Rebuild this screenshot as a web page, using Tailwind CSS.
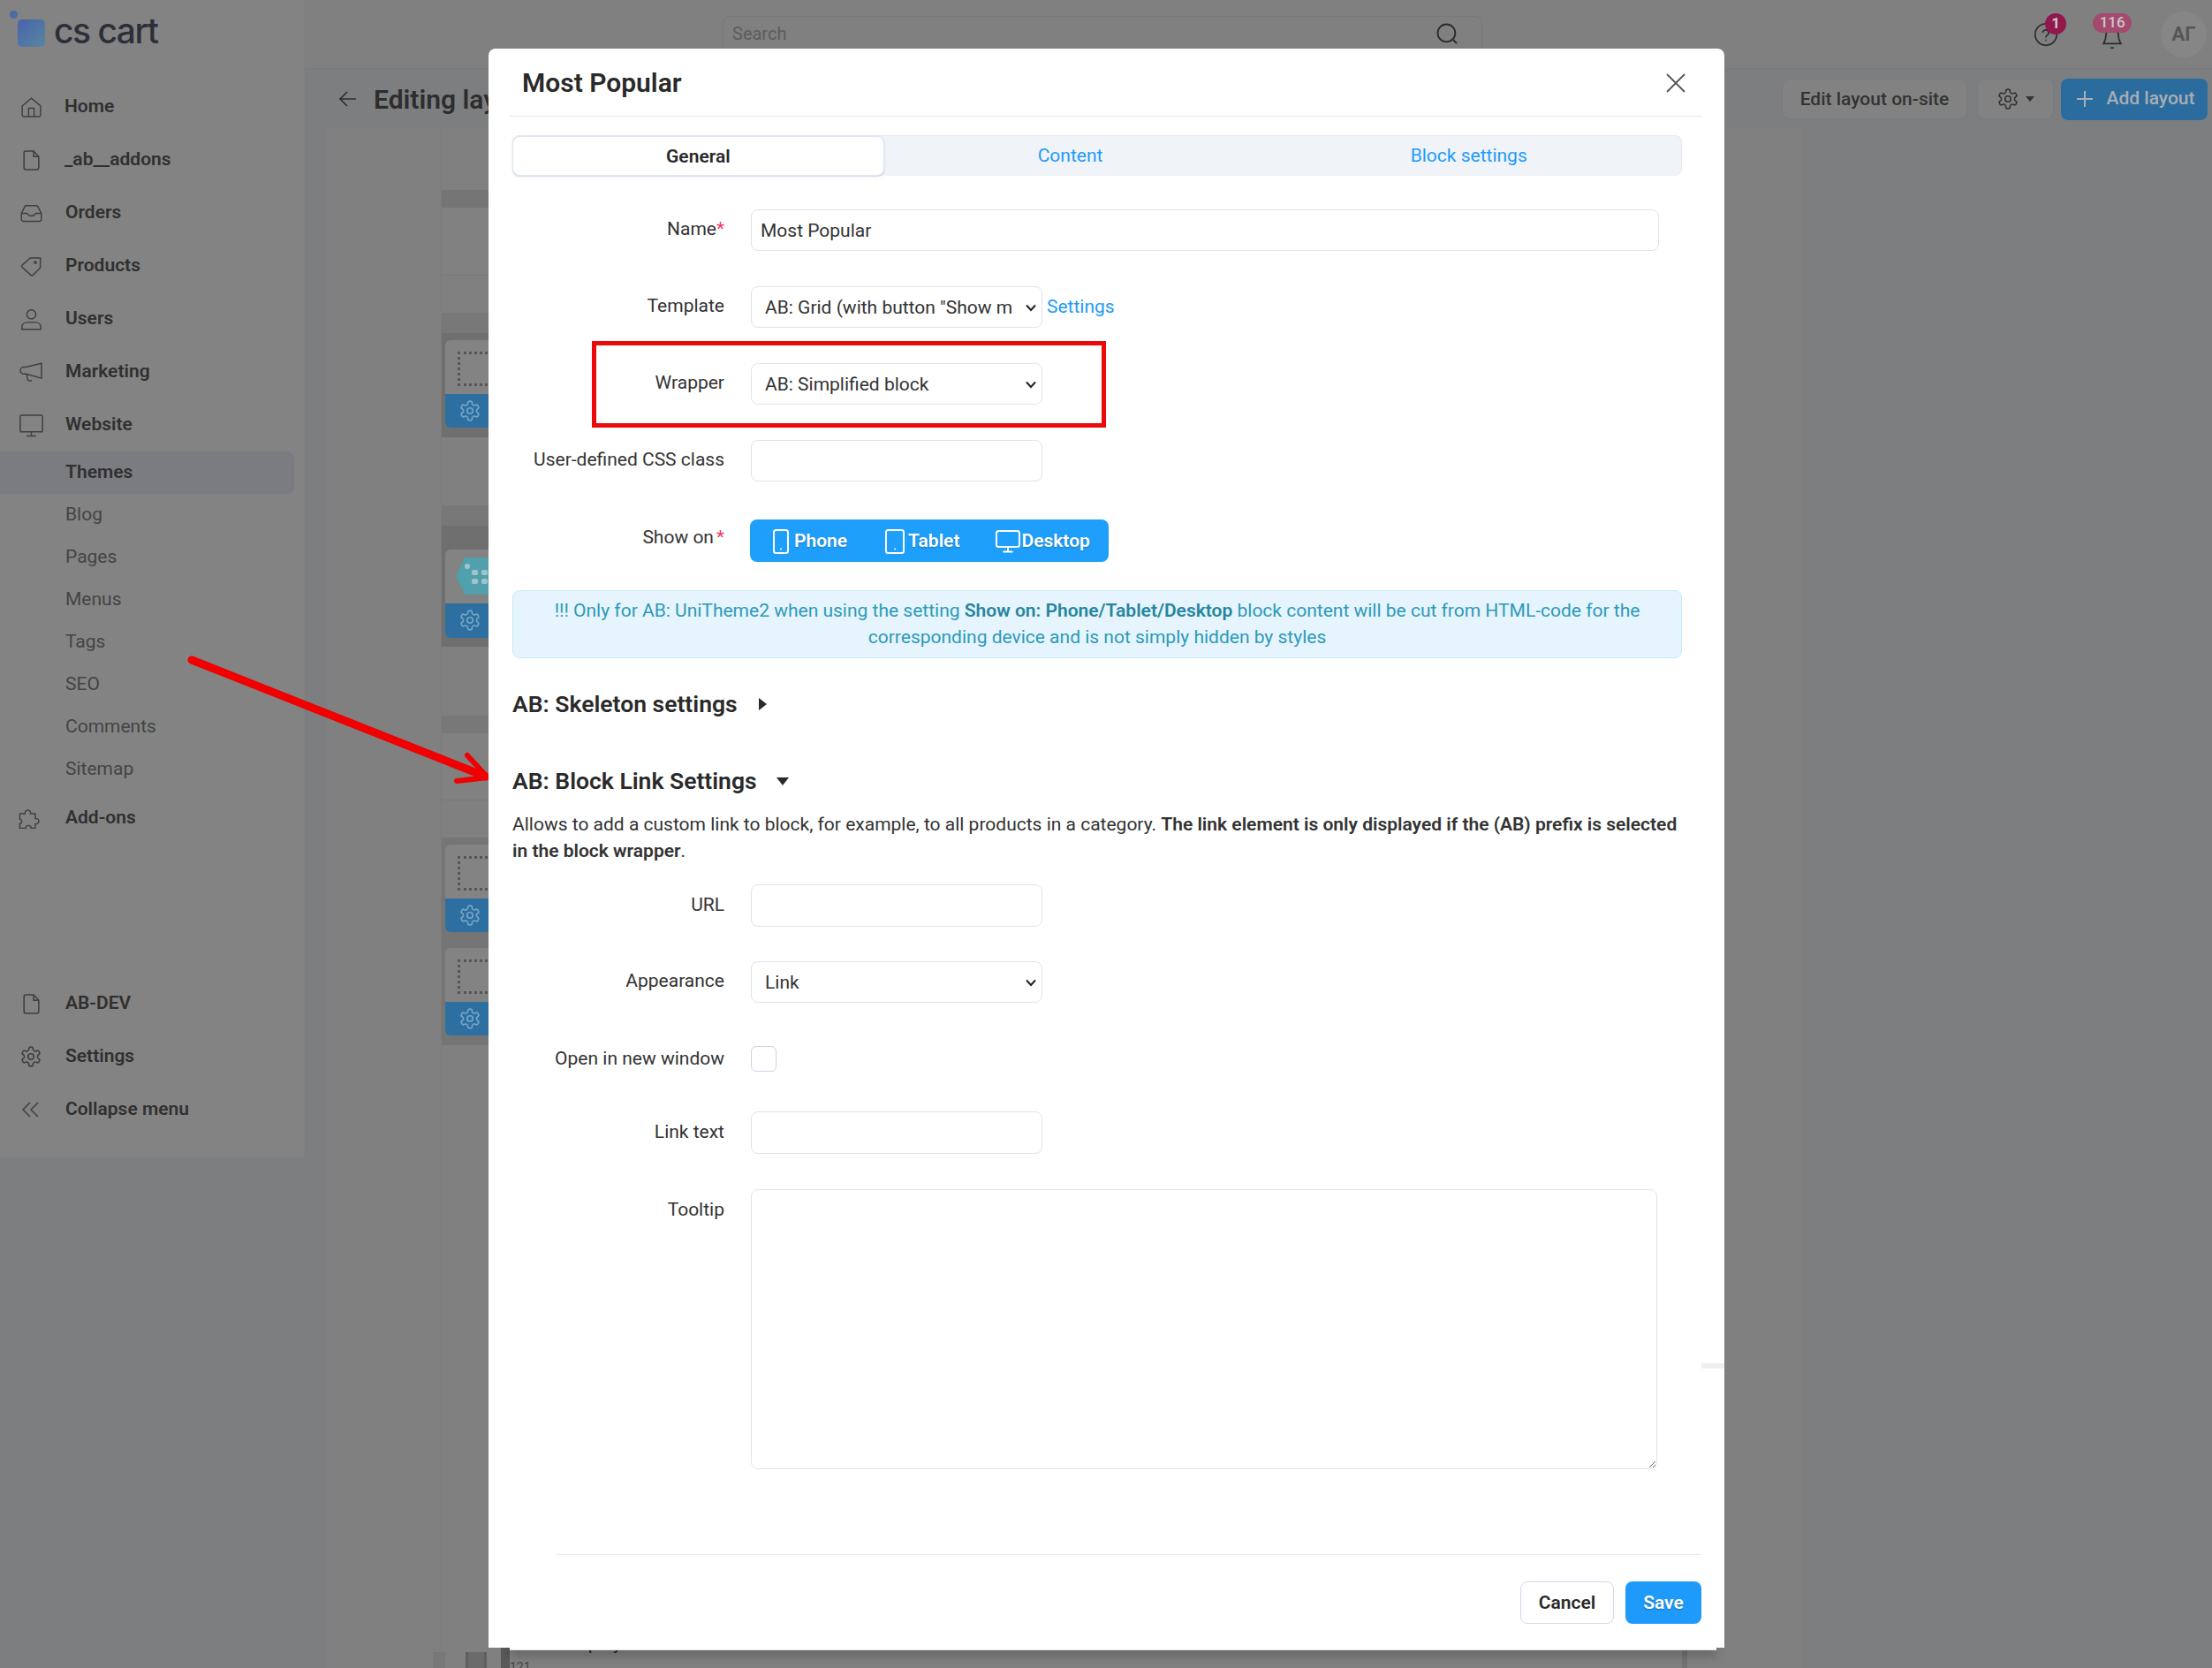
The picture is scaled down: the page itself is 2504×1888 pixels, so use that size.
<!DOCTYPE html>
<html lang="en">
<head>
  <meta charset="UTF-8">
  <title>Most Popular</title>
  <script src="https://cdn.jsdelivr.net/npm/@tailwindcss/browser@4"></script>
</head>
<body class="relative w-[2504px] h-[1888px] overflow-hidden bg-[#7d7e80] font-[family-name:Roboto,sans-serif] text-[21px] text-[#333]">
  <svg class="hidden">
    <symbol id="gear" viewBox="0 0 24 24" fill="none" stroke="currentColor" stroke-width="1.5">
      <path d="M12.22 2h-.44a2 2 0 0 0-2 2v.18a2 2 0 0 1-1 1.73l-.43.25a2 2 0 0 1-2 0l-.15-.08a2 2 0 0 0-2.73.73l-.22.38a2 2 0 0 0 .73 2.73l.15.1a2 2 0 0 1 1 1.72v.51a2 2 0 0 1-1 1.74l-.15.09a2 2 0 0 0-.73 2.73l.22.38a2 2 0 0 0 2.73.73l.15-.08a2 2 0 0 1 2 0l.43.25a2 2 0 0 1 1 1.73V20a2 2 0 0 0 2 2h.44a2 2 0 0 0 2-2v-.18a2 2 0 0 1 1-1.73l.43-.25a2 2 0 0 1 2 0l.15.08a2 2 0 0 0 2.73-.73l.22-.39a2 2 0 0 0-.73-2.73l-.15-.08a2 2 0 0 1-1-1.74v-.5a2 2 0 0 1 1-1.74l.15-.09a2 2 0 0 0 .73-2.73l-.22-.38a2 2 0 0 0-2.73-.73l-.15.08a2 2 0 0 1-2 0l-.43-.25a2 2 0 0 1-1-1.73V4a2 2 0 0 0-2-2z"/>
      <circle cx="12" cy="12" r="3"/>
    </symbol>
    <symbol id="file" viewBox="0 0 24 24" fill="none" stroke="currentColor" stroke-width="1.5">
      <path d="M14.5 2H6a2 2 0 0 0-2 2v16a2 2 0 0 0 2 2h12a2 2 0 0 0 2-2V8z"/><path d="M14.5 2v6H20"/>
    </symbol>
    <symbol id="chevron" viewBox="0 0 14 14" fill="none" stroke="currentColor" stroke-width="2">
      <path d="m2 4.500 5 5.500 5-5.500"/>
    </symbol>
  </svg>

  <div class="flex h-full">
    <!-- Sidebar -->
    <aside class="w-[346px] h-[1310px] shrink-0 bg-[#838383] border-r border-[#7b7b7b] text-[#303030]">
      <div class="relative h-[90px]">
        <span class="absolute left-[11px] top-[12px] size-[9px] rounded-full bg-[#4a6ba8]"></span>
        <span class="absolute left-[20px] top-[22px] size-[31px] rounded-[5px] bg-gradient-to-br from-[#4a62ad] to-[#58869e]"></span>
        <span class="absolute left-[61px] top-[11px] font-[family-name:Inter,sans-serif] text-[39px] leading-[48px] font-medium tracking-[-1.5px] text-[#2c2f38]">cs cart</span>
      </div>
      <nav class="font-semibold">
        <a class="flex items-center h-[60px] pt-[2px]">
          <svg class="ml-[23px] size-[25px] text-[#3f3f41]" viewBox="0 0 24 24" fill="none" stroke="currentColor" stroke-width="1.4"><path d="M2 10.500 12 2l10 8.500V20a2 2 0 0 1-2 2H4a2 2 0 0 1-2-2z"/><path d="M9 22v-9h6v9"/></svg>
          <span class="ml-[25px]">Home</span>
        </a>
        <a class="flex items-center h-[60px] pt-[2px]">
          <svg class="ml-[23px] size-[25px] text-[#3f3f41]"><use href="#file"/></svg>
          <span class="ml-[25px]">_ab__addons</span>
        </a>
        <a class="flex items-center h-[60px] pt-[2px]">
          <svg class="ml-[22px] size-[27px] text-[#3f3f41]" viewBox="0 0 24 24" fill="none" stroke="currentColor" stroke-width="1.3"><path d="M2 12l3.500-7a1.500 1.500 0 0 1 1.300-.8h10.400a1.500 1.500 0 0 1 1.300.8L22 12v6a2 2 0 0 1-2 2H4a2 2 0 0 1-2-2z"/><path d="M2 12h5.500l2.500 2.500h4l2.500-2.500H22"/></svg>
          <span class="ml-[25px]">Orders</span>
        </a>
        <a class="flex items-center h-[60px] pt-[2px]">
          <svg class="ml-[22px] size-[27px] text-[#3f3f41]" viewBox="0 0 24 24" fill="none" stroke="currentColor" stroke-width="1.3"><path d="M21 3.500v9.600a1 1 0 0 1-.3.7L13.400 21a1.200 1.200 0 0 1-1.700 0L2.600 12.600a1.200 1.200 0 0 1 0-1.700L10.400 4a1 1 0 0 1 .7-.5z"/><circle cx="16" cy="8" r="1" fill="currentColor"/></svg>
          <span class="ml-[25px]">Products</span>
        </a>
        <a class="flex items-center h-[60px] pt-[2px]">
          <svg class="ml-[22px] size-[27px] text-[#3f3f41]" viewBox="0 0 24 24" fill="none" stroke="currentColor" stroke-width="1.3"><circle cx="12" cy="7" r="4.500"/><path d="M2.500 22v-2.500a5 5 0 0 1 5-4.500h9a5 5 0 0 1 5 4.500V22z"/></svg>
          <span class="ml-[25px]">Users</span>
        </a>
        <a class="flex items-center h-[60px] pt-[2px]">
          <svg class="ml-[21px] size-[29px] text-[#3f3f41]" viewBox="0 0 24 24" fill="none" stroke="currentColor" stroke-width="1.2"><path d="M21.500 3.500v14L7 13.500H5a3 3 0 0 1 0-6.500h2z"/><path d="M7.500 13.800l1 4.700a2.500 2.500 0 0 0 4 .8"/></svg>
          <span class="ml-[24px]">Marketing</span>
        </a>
        <a class="flex items-center h-[60px] pt-[2px]">
          <svg class="ml-[21px] size-[29px] text-[#3f3f41]" viewBox="0 0 24 24" fill="none" stroke="currentColor" stroke-width="1.2"><rect x="1.500" y="2.500" width="21" height="15.500" rx="1.500"/><path d="M12 18v4M7.500 22h9"/></svg>
          <span class="ml-[24px]">Website</span>
        </a>
        <a class="flex items-center h-[48px] w-[333px] mt-[1px] pl-[74px] rounded-r-[8px] bg-[#7a7c80]">Themes</a>
      </nav>
      <div class="text-[#444]">
        <a class="flex items-center h-[48px] pl-[74px]">Blog</a>
        <a class="flex items-center h-[48px] pl-[74px]">Pages</a>
        <a class="flex items-center h-[48px] pl-[74px]">Menus</a>
        <a class="flex items-center h-[48px] pl-[74px]">Tags</a>
        <a class="flex items-center h-[48px] pl-[74px]">SEO</a>
        <a class="flex items-center h-[48px] pl-[74px]">Comments</a>
        <a class="flex items-center h-[48px] pl-[74px]">Sitemap</a>
      </div>
      <nav class="font-semibold">
        <a class="flex items-center h-[60px] pt-[2px]">
          <svg class="ml-[20px] size-[29px] text-[#3f3f41]" viewBox="0 0 24 24" fill="none" stroke="currentColor" stroke-width="1.2"><path d="M2 7.500h5a2.600 2.600 0 1 1 5 0h4.500V12a2.600 2.600 0 1 1 0 5v4h-4a2.500 2.500 0 0 0-5 0H2v-4a2.300 2.300 0 0 0 0-4.500z"/></svg>
          <span class="ml-[25px]">Add-ons</span>
        </a>
        <a class="flex items-center h-[60px] mt-[150px] pt-[2px]">
          <svg class="ml-[23px] size-[25px] text-[#3f3f41]"><use href="#file"/></svg>
          <span class="ml-[26px]">AB-DEV</span>
        </a>
        <a class="flex items-center h-[60px] pt-[2px]">
          <svg class="ml-[22px] size-[26px] text-[#3f3f41]"><use href="#gear"/></svg>
          <span class="ml-[26px]">Settings</span>
        </a>
        <a class="flex items-center h-[60px] pt-[2px]">
          <svg class="ml-[23px] size-[24px] text-[#3f3f41]" viewBox="0 0 24 24" fill="none" stroke="currentColor" stroke-width="1.5"><path d="M11 4 3 12l8 8M20 4l-8 8 8 8"/></svg>
          <span class="ml-[27px]">Collapse menu</span>
        </a>
      </nav>
    </aside>

    <!-- Page behind the dialog -->
    <main class="flex-1 min-w-0">
      <header class="flex items-center h-[78px] bg-[#808080] border-b border-[#787a7c] pl-[472px] pr-[6px]">
        <div class="flex items-center w-[862px] h-[42px] px-[10px] rounded-[8px] border border-[#777] text-[#5c5c5c] text-[20px]">
          <span class="mb-[2px]">Search</span>
          <svg class="ml-auto mr-[15px] mb-[2px] size-[28px] text-[#2b2b2b]" viewBox="0 0 24 24" fill="none" stroke="currentColor" stroke-width="1.6"><circle cx="11.500" cy="11.500" r="8.500"/><path d="m18 18 3.500 3.500"/></svg>
        </div>
        <div class="relative ml-[624px] size-[28px]">
          <svg class="size-[28px] text-[#2e2e2e]" viewBox="0 0 24 24" fill="none" stroke="currentColor" stroke-width="1.5" stroke-linecap="round"><circle cx="12" cy="12" r="10.500"/><path d="M9 9.500a3 3 0 0 1 5.800.800c0 2-2.800 2.400-2.800 4M12 17.500h.01"/></svg>
          <span class="absolute left-[13px] top-[-10px] flex items-center justify-center size-[24px] rounded-full bg-[#92174d] text-[17px] font-bold text-[#c9c9c9]">1</span>
        </div>
        <div class="relative ml-[39px] w-[44px] h-[46px]">
          <svg class="absolute left-[8px] top-[13px] size-[28px] text-[#2e2e2e]" viewBox="0 0 24 24" fill="none" stroke="currentColor" stroke-width="1.5"><path d="M6 9a6 6 0 0 1 12 0c0 5 1.500 7 2.500 8.500h-17C4.500 16 6 14 6 9z"/><path d="M10.500 21.500h3"/></svg>
          <span class="absolute left-0 top-[-1px] flex items-center justify-center w-[44px] h-[22px] rounded-full bg-[#a44a6e] text-[17px] font-medium leading-none text-[#c9c9c9]">116</span>
        </div>
        <div class="ml-[33px] flex items-center justify-center size-[52px] rounded-full bg-[#868686] text-[22px] font-bold text-[#565656]">АГ</div>
      </header>
      <div class="flex items-center h-[67px] pt-[1px] pl-[36px] pr-[5px]">
        <svg class="size-[24px] text-[#2e2e2e]" viewBox="0 0 24 24" fill="none" stroke="currentColor" stroke-width="1.7"><path d="M21 12H3M11 4l-8 8 8 8"/></svg>
        <h1 class="ml-[17px] text-[30px] font-semibold text-[#2d2d2d] whitespace-nowrap">Editing layout</h1>
        <button class="ml-auto h-[46px] w-[210px] pt-[1px] rounded-[8px] bg-[#828282] border border-[#777a80] font-medium text-[#333]">Edit layout on-site</button>
        <button class="ml-[11px] flex items-center justify-center gap-[7px] h-[46px] w-[87px] rounded-[8px] bg-[#828282] border border-[#777a80] text-[#333]">
          <svg class="size-[26px]"><use href="#gear"/></svg>
          <span class="border-x-[5px] border-t-[6px] border-x-transparent border-t-[#333]"></span>
        </button>
        <button class="ml-[8px] flex items-center justify-center gap-[14px] h-[47px] w-[166px] pl-[3px] rounded-[8px] bg-[#2b6c9e] font-medium text-[#a8aeb4]">
          <svg class="size-[20px]" viewBox="0 0 20 20" fill="none" stroke="currentColor" stroke-width="2"><path d="M10 1v18M1 10h18"/></svg>
          Add layout
        </button>
      </div>
      <div class="flex ml-[24px] w-[1669px] h-[1743px] bg-[#808080]">
        <div class="w-[130px] shrink-0 border-r border-[#7a7a7a]"></div>
        <div class="w-[700px]">
          <div class="h-[70px]"></div>
          <div class="h-[20px] bg-[#757575]"></div>
          <div class="h-[77px] bg-[#818181] border-b border-[#787878]"></div>
          <div class="h-[42px]"></div>
          <div class="h-[23px] bg-[#787878]"></div>
          <div class="h-[118px] pl-[4px] pt-[8px] bg-[#6f6f6f]">
            <div class="h-[99px] rounded-[6px] overflow-hidden bg-[#838383]">
              <div class="h-[61px] pl-[14px] pt-[13px]"><div class="w-[70px] h-[39px] border-[3px] border-dotted border-[#555]"></div></div>
              <div class="h-[38px] pl-[15px] pt-[6px] bg-[#2d6fa0] text-[#78a6c6]"><svg class="size-[26px]"><use href="#gear"/></svg></div>
            </div>
          </div>
          <div class="h-[77px]"></div>
          <div class="h-[23px] bg-[#787878]"></div>
          <div class="h-[137px] pl-[4px] pt-[27px] bg-[#6f6f6f]">
            <div class="h-[100px] rounded-[6px] overflow-hidden bg-[#838383]">
              <div class="h-[61px] pl-[12px] pt-[9px]">
                <svg class="w-[60px] h-[42px]" viewBox="0 0 60 42"><path d="M11 1h34l13 20-13 20H11L1 21z" fill="#52a0ad" stroke="#52a0ad" stroke-width="2" stroke-linejoin="round"/><g fill="#9fc4cb"><circle cx="13" cy="10" r="3"/><rect x="18" y="14" width="7" height="6" rx="2"/><rect x="29" y="14" width="7" height="6" rx="2"/><rect x="18" y="24" width="7" height="6" rx="2"/><rect x="29" y="24" width="7" height="6" rx="2"/></g></svg>
              </div>
              <div class="h-[39px] pl-[15px] pt-[6px] bg-[#2d6fa0] text-[#78a6c6]"><svg class="size-[26px]"><use href="#gear"/></svg></div>
            </div>
          </div>
          <div class="h-[78px]"></div>
          <div class="h-[20px] bg-[#787878]"></div>
          <div class="h-[76px] bg-[#818181] border-b border-[#787878]"></div>
          <div class="h-[42px]"></div>
          <div class="h-[235px] pl-[4px] pt-[8px] bg-[#757575]">
            <div class="h-[99px] rounded-[6px] overflow-hidden bg-[#838383]">
              <div class="h-[61px] pl-[14px] pt-[13px]"><div class="w-[70px] h-[39px] border-[3px] border-dotted border-[#555]"></div></div>
              <div class="h-[38px] pl-[15px] pt-[6px] bg-[#2d6fa0] text-[#78a6c6]"><svg class="size-[26px]"><use href="#gear"/></svg></div>
            </div>
            <div class="mt-[18px] h-[99px] rounded-[6px] overflow-hidden bg-[#838383]">
              <div class="h-[61px] pl-[14px] pt-[13px]"><div class="w-[70px] h-[39px] border-[3px] border-dotted border-[#555]"></div></div>
              <div class="h-[38px] pl-[15px] pt-[6px] bg-[#2d6fa0] text-[#78a6c6]"><svg class="size-[26px]"><use href="#gear"/></svg></div>
            </div>
          </div>
        </div>
      </div>
    </main>
  </div>

  <!-- Scraps of the page showing below the dialog -->
  <div class="absolute left-[567px] top-[1860px] w-[10px] h-[28px] bg-[#585858]"></div>
  <div class="absolute left-[490px] top-[1870px] w-[14px] h-[18px] bg-[#787878]"></div>
  <div class="absolute left-[527px] top-[1870px] w-[24px] h-[18px] border-x-[3px] border-[#5f5f5f] bg-[#6b6b6b]"></div>
  <div class="absolute left-[577px] top-[1879px] text-[14px] leading-[16px] text-[#444]">121</div>
  <div class="absolute left-[636px] top-[1845px] text-[21px] text-[#222]">Display</div>
  <div class="absolute left-[1904px] top-[1865px] w-[6px] h-[23px] bg-[#737373]"></div>

  <!-- Red annotation arrow -->
  <svg class="absolute left-[202px] top-[731px]" width="370" height="170" viewBox="0 0 370 170" fill="none" stroke="#f00000" stroke-linecap="round" stroke-linejoin="round">
    <path d="M15 16 348 148" stroke-width="9"/>
    <path d="M327 124 350 149 315 153" stroke-width="6"/>
  </svg>

  <!-- Dialog -->
  <div class="absolute left-[577px] top-[1860px] w-[1366px] h-[8px] bg-white border-b border-[#dde1ee] shadow-[0_5px_12px_rgba(0,0,0,0.3)]"></div>
  <div class="absolute left-[553px] top-[55px] w-[1399px] h-[1810px] rounded-tl-[8px] rounded-tr-[8px] bg-white pl-[27px] pr-[26px] text-[#333]">
    <div class="absolute right-0 top-[1488px] w-[26px] h-[6px] bg-[#efefef]"></div>

    <div class="relative flex items-center h-[77px] -ml-[4px] border-b border-[#e3e6f0]">
      <h2 class="ml-[15px] pt-[1px] text-[30px] font-semibold text-[#2a2a2a]">Most Popular</h2>
      <svg class="absolute right-[17px] top-[27px] size-[24px] text-[#555]" viewBox="0 0 24 24" fill="none" stroke="currentColor" stroke-width="1.8"><path d="m2 2 20 20M22 2 2 22"/></svg>
    </div>

    <div class="flex mt-[21px] w-[1324px] h-[46px] rounded-[8px] bg-[#f0f3f7] border-t border-r border-[#e4e8f0] text-[#1e9bfa]">
      <div class="flex items-center justify-center w-[421px] pt-[2px] rounded-[8px] bg-white border border-[#dfe3ef] font-semibold text-[#2a2a2a] shadow-[0_1px_2px_rgba(120,140,190,0.35)]">General</div>
      <div class="flex items-center justify-center w-[422px] pt-[1px]">Content</div>
      <div class="flex items-center justify-center w-[481px] pt-[1px]">Block settings</div>
    </div>

    <div class="flex items-center mt-[38px] h-[47px]">
      <label class="w-[240px] text-right mb-[2px]">Name<span class="text-[#ef3b5d]">*</span></label>
      <input class="ml-[30px] w-[1028px] h-[47px] px-[10px] rounded-[8px] border border-[#dfe3ef] text-[#333]" value="Most Popular">
    </div>

    <div class="flex items-center mt-[40px] h-[47px]">
      <label class="w-[240px] text-right mb-[1px]">Template</label>
      <div class="relative ml-[30px]">
        <select class="block appearance-none w-[330px] h-[47px] pt-[2px] pl-[15px] pr-[33px] rounded-[8px] border border-[#dfe3ef] bg-white text-[#333]">
          <option>AB: Grid (with button "Show more")</option>
        </select>
        <svg class="absolute right-[6px] top-[17px] size-[14px] text-[#222] pointer-events-none"><use href="#chevron"/></svg>
      </div>
      <a class="ml-[5px] text-[#1e9bfa]">Settings</a>
    </div>

    <div class="relative flex items-center mt-[40px] h-[47px]">
      <label class="w-[240px] text-right mb-[1px]">Wrapper</label>
      <div class="relative ml-[30px]">
        <select class="block appearance-none w-[330px] h-[47px] pt-[2px] pl-[15px] pr-[33px] rounded-[8px] border border-[#dfe3ef] bg-white text-[#333]">
          <option>AB: Simplified block</option>
        </select>
        <svg class="absolute right-[6px] top-[17px] size-[14px] text-[#222] pointer-events-none"><use href="#chevron"/></svg>
      </div>
      <div class="absolute left-[90px] top-[-25px] w-[582px] h-[98px] border-[5px] border-[#ea0a0a]"></div>
    </div>

    <div class="flex items-center mt-[40px] h-[47px]">
      <label class="w-[240px] text-right mb-[1px]">User-defined CSS class</label>
      <input class="ml-[30px] w-[330px] h-[47px] px-[10px] rounded-[8px] border border-[#dfe3ef]">
    </div>

    <div class="flex items-center mt-[43px] h-[48px]">
      <label class="w-[240px] text-right mb-[6px]">Show on<span class="ml-[3px] text-[#ef3b5d]">*</span></label>
      <div class="ml-[29px] flex items-center w-[406px] h-[48px] pl-[26px] pt-[1px] rounded-[8px] bg-[#1e9ffb] font-semibold text-white [text-shadow:0_1px_2px_rgba(0,0,0,0.25)]">
        <svg class="w-[18px] h-[28px]" viewBox="0 0 18 28" fill="none" stroke="currentColor" stroke-width="2" stroke-linecap="round"><rect x="1" y="1" width="16" height="26" rx="2.500"/><path d="M9 22.500v.01"/></svg>
        <span class="ml-[6px]">Phone</span>
        <svg class="ml-[43px] w-[22px] h-[28px]" viewBox="0 0 22 28" fill="none" stroke="currentColor" stroke-width="2" stroke-linecap="round"><rect x="1" y="1" width="20" height="26" rx="2.500"/><path d="M11 22.500v.01"/></svg>
        <span class="ml-[4px]">Tablet</span>
        <svg class="ml-[41px] w-[28px] h-[26px]" viewBox="0 0 28 26" fill="none" stroke="currentColor" stroke-width="2"><rect x="1" y="1" width="26" height="18" rx="2.500"/><path d="M14 19v5M8.500 24.500h11"/></svg>
        <span class="ml-[1px]">Desktop</span>
      </div>
    </div>

    <div class="mt-[32px] w-[1324px] h-[77px] pt-[7px] rounded-[8px] bg-[#e6f4fd] border border-[#c4ecfb] text-center leading-[30px] text-[#2c9ab9]">
      !!! Only for AB: UniTheme2 when using the setting <b class="font-semibold text-[#26869f]">Show on: Phone/Tablet/Desktop</b> block content will be cut from HTML-code for the<br>corresponding device and is not simply hidden by styles
    </div>

    <div class="flex items-center mt-[37px] h-[30px] text-[26.500px] font-semibold text-[#2a2a2a]">
      <h3>AB: Skeleton settings</h3>
      <span class="ml-[24px] border-y-[7px] border-l-[9px] border-y-transparent border-l-[#2a2a2a]"></span>
    </div>

    <div class="flex items-center mt-[57px] h-[30px] text-[26.500px] font-semibold text-[#2a2a2a]">
      <h3>AB: Block Link Settings</h3>
      <span class="ml-[22px] border-x-[7px] border-t-[9px] border-x-transparent border-t-[#2a2a2a]"></span>
    </div>

    <p class="mt-[19px] w-[1330px] leading-[30px]">Allows to add a custom link to block, for example, to all products in a category. <b class="font-semibold">The link element is only displayed if the (AB) prefix is selected in the block wrapper</b>.</p>

    <div class="flex items-center mt-[23px] h-[48px]">
      <label class="w-[240px] text-right mb-[1px]">URL</label>
      <input class="ml-[30px] w-[330px] h-[48px] px-[10px] rounded-[8px] border border-[#dfe3ef]">
    </div>

    <div class="flex items-center mt-[39px] h-[47px]">
      <label class="w-[240px] text-right mb-[1px]">Appearance</label>
      <div class="relative ml-[30px]">
        <select class="block appearance-none w-[330px] h-[47px] pt-[2px] pl-[15px] pr-[33px] rounded-[8px] border border-[#dfe3ef] bg-white text-[#333]">
          <option>Link</option>
        </select>
        <svg class="absolute right-[6px] top-[17px] size-[14px] text-[#222] pointer-events-none"><use href="#chevron"/></svg>
      </div>
    </div>

    <div class="flex items-center mt-[40px] h-[47px]">
      <label class="w-[240px] text-right">Open in new window</label>
      <span class="ml-[30px] size-[29px] rounded-[6px] border border-[#cdd3e3]"></span>
    </div>

    <div class="flex items-center mt-[36px] h-[48px]">
      <label class="w-[240px] text-right mb-[1px]">Link text</label>
      <input class="ml-[30px] w-[330px] h-[48px] px-[10px] rounded-[8px] border border-[#dfe3ef]">
    </div>

    <div class="flex items-start mt-[40px]">
      <label class="w-[240px] mt-[8px] text-right">Tooltip</label>
      <textarea class="block ml-[30px] w-[1026px] h-[317px] px-[10px] rounded-[8px] border border-[#dfe3ef]"></textarea>
    </div>

    <div class="ml-[50px] mt-[96px] border-t border-[#e8eaf0]"></div>
    <div class="flex justify-end gap-[13px] mt-[30px]">
      <button class="w-[106px] h-[48px] pt-[1px] rounded-[8px] bg-white border border-[#d5daea] font-semibold text-[#2a2a2a]">Cancel</button>
      <button class="w-[86px] h-[48px] pt-[1px] rounded-[8px] bg-[#1e9bfa] font-semibold text-white [text-shadow:0_1px_2px_rgba(0,0,0,0.3)]">Save</button>
    </div>
  </div>
</body>
</html>
